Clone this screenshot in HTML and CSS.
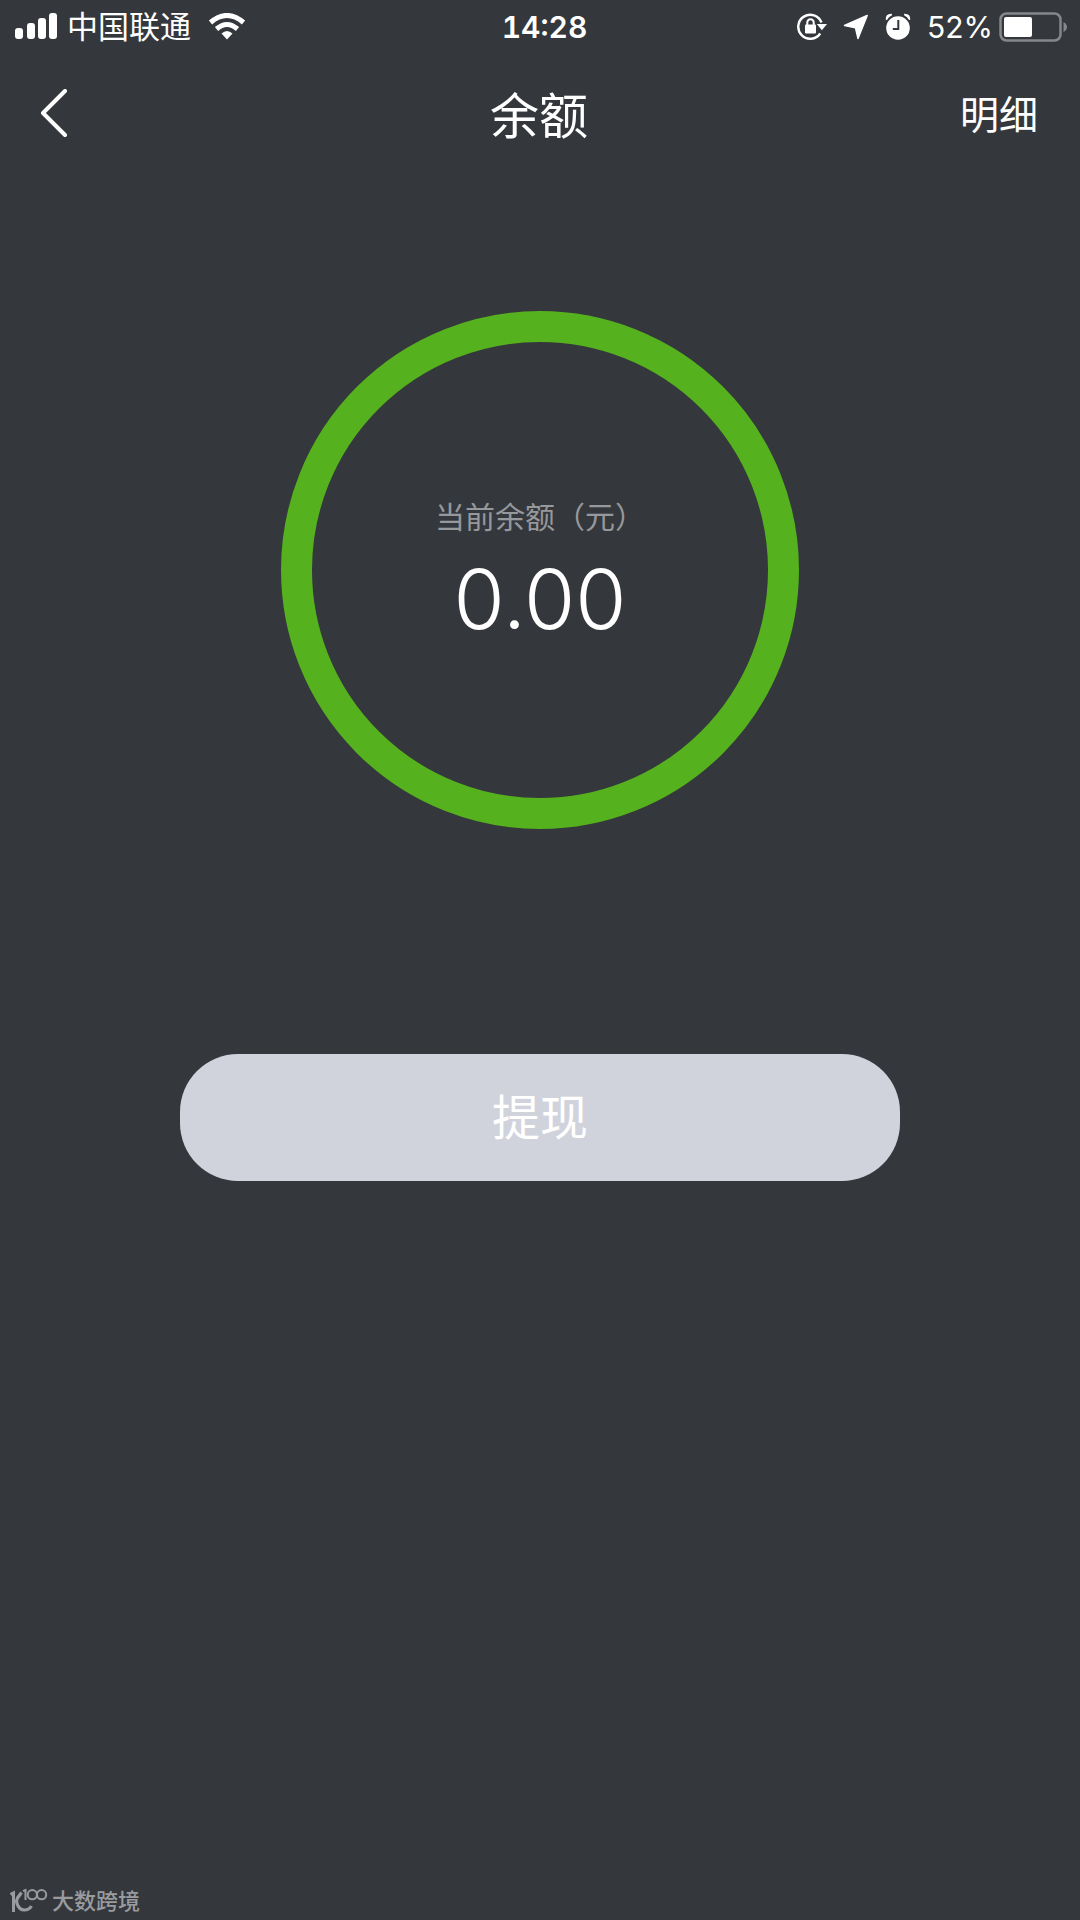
FILE: index.html
```html
<!DOCTYPE html>
<html lang="zh-CN">
<head>
<meta charset="utf-8">
<meta name="viewport" content="width=device-width, initial-scale=1">
<title>余额</title>
<link rel="stylesheet" href="styles.css">
</head>
<body>
<div class="screen">
  <div class="status">
    <div class="status-left">
      <svg class="icon" width="44" height="28" viewBox="0 0 44 28" fill="#fff" aria-hidden="true">
        <rect x="0" y="15" width="8" height="11" rx="3"/>
        <rect x="12" y="10" width="8" height="16" rx="3"/>
        <rect x="23" y="5" width="8" height="21" rx="3"/>
        <rect x="34" y="0" width="8" height="26" rx="3"/>
      </svg>
      <span class="carrier">中国联通</span>
      <svg class="icon" width="38" height="28" viewBox="0 0 38 28" fill="none" stroke="#fff" stroke-width="5" aria-hidden="true">
        <path d="M2.500 9.500Q19-4.500 35.500 9.500"/>
        <path d="M8.500 16Q19 7 29.500 16"/>
        <path d="M13.500 20.500Q19 15.500 24.500 20.500L19 26.500Z" fill="#fff" stroke="none"/>
      </svg>
    </div>
    <time class="clock">14:28</time>
    <div class="status-right">
      <svg class="icon" width="30" height="28" viewBox="0 0 30 28" fill="none" stroke="#fff" aria-hidden="true">
        <path d="M23.200 20.500A12 12 0 1 1 24.500 9.500" stroke-width="2.400"/>
        <path d="M19.800 11H30L24.900 17.200Z" fill="#fff" stroke="none"/>
        <rect x="8" y="11.500" width="11" height="9" rx="1" fill="#fff" stroke="none"/>
        <path d="M10.300 12V9.500a3.200 3.200 0 0 1 6.400 0V12" stroke-width="2"/>
      </svg>
      <svg class="icon" width="26" height="28" viewBox="0 0 26 28" fill="#fff" stroke="#fff" stroke-width="1.500" stroke-linejoin="round" aria-hidden="true">
        <path d="M24.200 2.500L15 25.500L12.500 14.800L1.500 12.500Z"/>
      </svg>
      <svg class="icon" width="26" height="28" viewBox="0 0 26 28" aria-hidden="true">
        <circle cx="13" cy="15" r="11.800" fill="#fff"/>
        <path d="M0.800 6.800Q0.200 0.500 6.800 0.800L7 2.200Q3.500 3.800 2 7ZM25.200 6.800Q25.800 0.500 19.200 0.800L19 2.200Q22.500 3.800 24 7Z" fill="#fff"/>
        <path d="M13.300 7V16H7.800" fill="none" stroke="#34373c" stroke-width="2"/>
      </svg>
      <span class="percent">52%</span>
      <svg class="icon battery" width="69" height="30" viewBox="0 0 69 30" aria-hidden="true">
        <rect x="1.500" y="1.500" width="60" height="27" rx="6" fill="none" stroke="#85878b" stroke-width="2.500"/>
        <rect x="5" y="5" width="28" height="20" rx="2" fill="#fff"/>
        <path d="M64.500 10Q68 12 68 15T64.500 20Z" fill="#85878b"/>
      </svg>
    </div>
  </div>

  <header class="nav">
    <button class="back" type="button" aria-label="返回">
      <svg class="icon" width="28" height="50" viewBox="0 0 28 50" fill="none" stroke="#fff" stroke-width="4" stroke-linecap="round" stroke-linejoin="round" aria-hidden="true">
        <path d="M25 2L3 24L25 46"/>
      </svg>
    </button>
    <h1 class="title">余额</h1>
    <a class="detail" href="#detail">明细</a>
  </header>

  <main class="main">
    <section class="ring">
      <p class="label">当前余额（元）</p>
      <p class="amount">0.00</p>
    </section>
    <button class="withdraw" type="button">提现</button>
  </main>

  <footer class="brand">
    <svg class="icon" width="40" height="26" viewBox="0 0 40 26" fill="none" stroke="#999b9f" aria-hidden="true">
      <path d="M0.500 6.500L3.500 5V24" stroke-width="3"/>
      <path d="M11.500 4.500L7.500 10Q6 12.500 7 15.500Q9 22 14.500 22Q19 22 21.500 18" stroke-width="3.200"/>
      <path d="M13 3.200L15.500 2V12" stroke-width="2"/>
      <circle cx="22.300" cy="6.700" r="4.600" stroke-width="2"/>
      <circle cx="31.600" cy="6.700" r="4.600" stroke-width="2"/>
    </svg>
    <span>大数跨境</span>
  </footer>
</div>
</body>
</html>
```
FILE: styles.css
```css
* {
  box-sizing: border-box;
}

body {
  margin: 0;
  background: #34373c;
  color: #fff;
  font-family: Inter, "Noto Sans CJK SC", sans-serif;
}

h1,
p {
  margin: 0;
  font-weight: 400;
}

button {
  border: 0;
  padding: 0;
  color: inherit;
  font: inherit;
  cursor: pointer;
}

.icon {
  display: block;
  flex: none;
}

.screen {
  display: flex;
  flex-direction: column;
  min-height: 100vh;
}

.status {
  display: grid;
  grid-template-columns: 1fr auto 1fr;
  align-items: center;
  height: 54px;
  padding: 0 12px 0 15px;
  font-size: 30px;
  line-height: 40px;
}

.status-left,
.status-right {
  display: flex;
  align-items: center;
}

.status-left {
  gap: 8px;
}

.carrier {
  margin-right: 9px;
  font-size: 31px;
}

.clock {
  padding-left: 6px;
  font-weight: 600;
  font-variant-numeric: tabular-nums;
}

.status-right {
  justify-content: flex-end;
  gap: 16px;
}

.battery {
  margin-left: -10px;
}

.nav {
  display: grid;
  grid-template-columns: 1fr auto 1fr;
  align-items: center;
  height: 120px;
  padding: 0 42px 0 40px;
}

.back {
  justify-self: start;
  background: none;
}

.title {
  padding-top: 6px;
  font-size: 49px;
  line-height: 72px;
}

.detail {
  justify-self: end;
  padding-top: 2px;
  color: inherit;
  font-size: 39px;
  line-height: 60px;
  text-decoration: none;
}

.main {
  display: flex;
  flex-direction: column;
  align-items: center;
  padding-top: 137px;
}

.ring {
  display: flex;
  flex-direction: column;
  align-items: center;
  width: 518px;
  height: 518px;
  padding-top: 153px;
  border: 31px solid #55b11d;
  border-radius: 50%;
}

.label {
  color: #96989b;
  font-size: 30px;
  line-height: 44px;
}

.amount {
  margin-top: 10px;
  font-size: 83px;
  font-weight: 350;
  line-height: 100px;
}

.withdraw {
  width: 66.6667%;
  height: 127px;
  margin-top: 225px;
  padding-bottom: 8px;
  border-radius: 58px;
  background: #d0d3dc;
  font-size: 48px;
}

.brand {
  display: flex;
  align-items: center;
  gap: 2px;
  margin-top: auto;
  padding: 0 10px 4px;
  color: #999b9f;
  font-size: 22px;
  font-weight: 500;
  line-height: 30px;
}
```
